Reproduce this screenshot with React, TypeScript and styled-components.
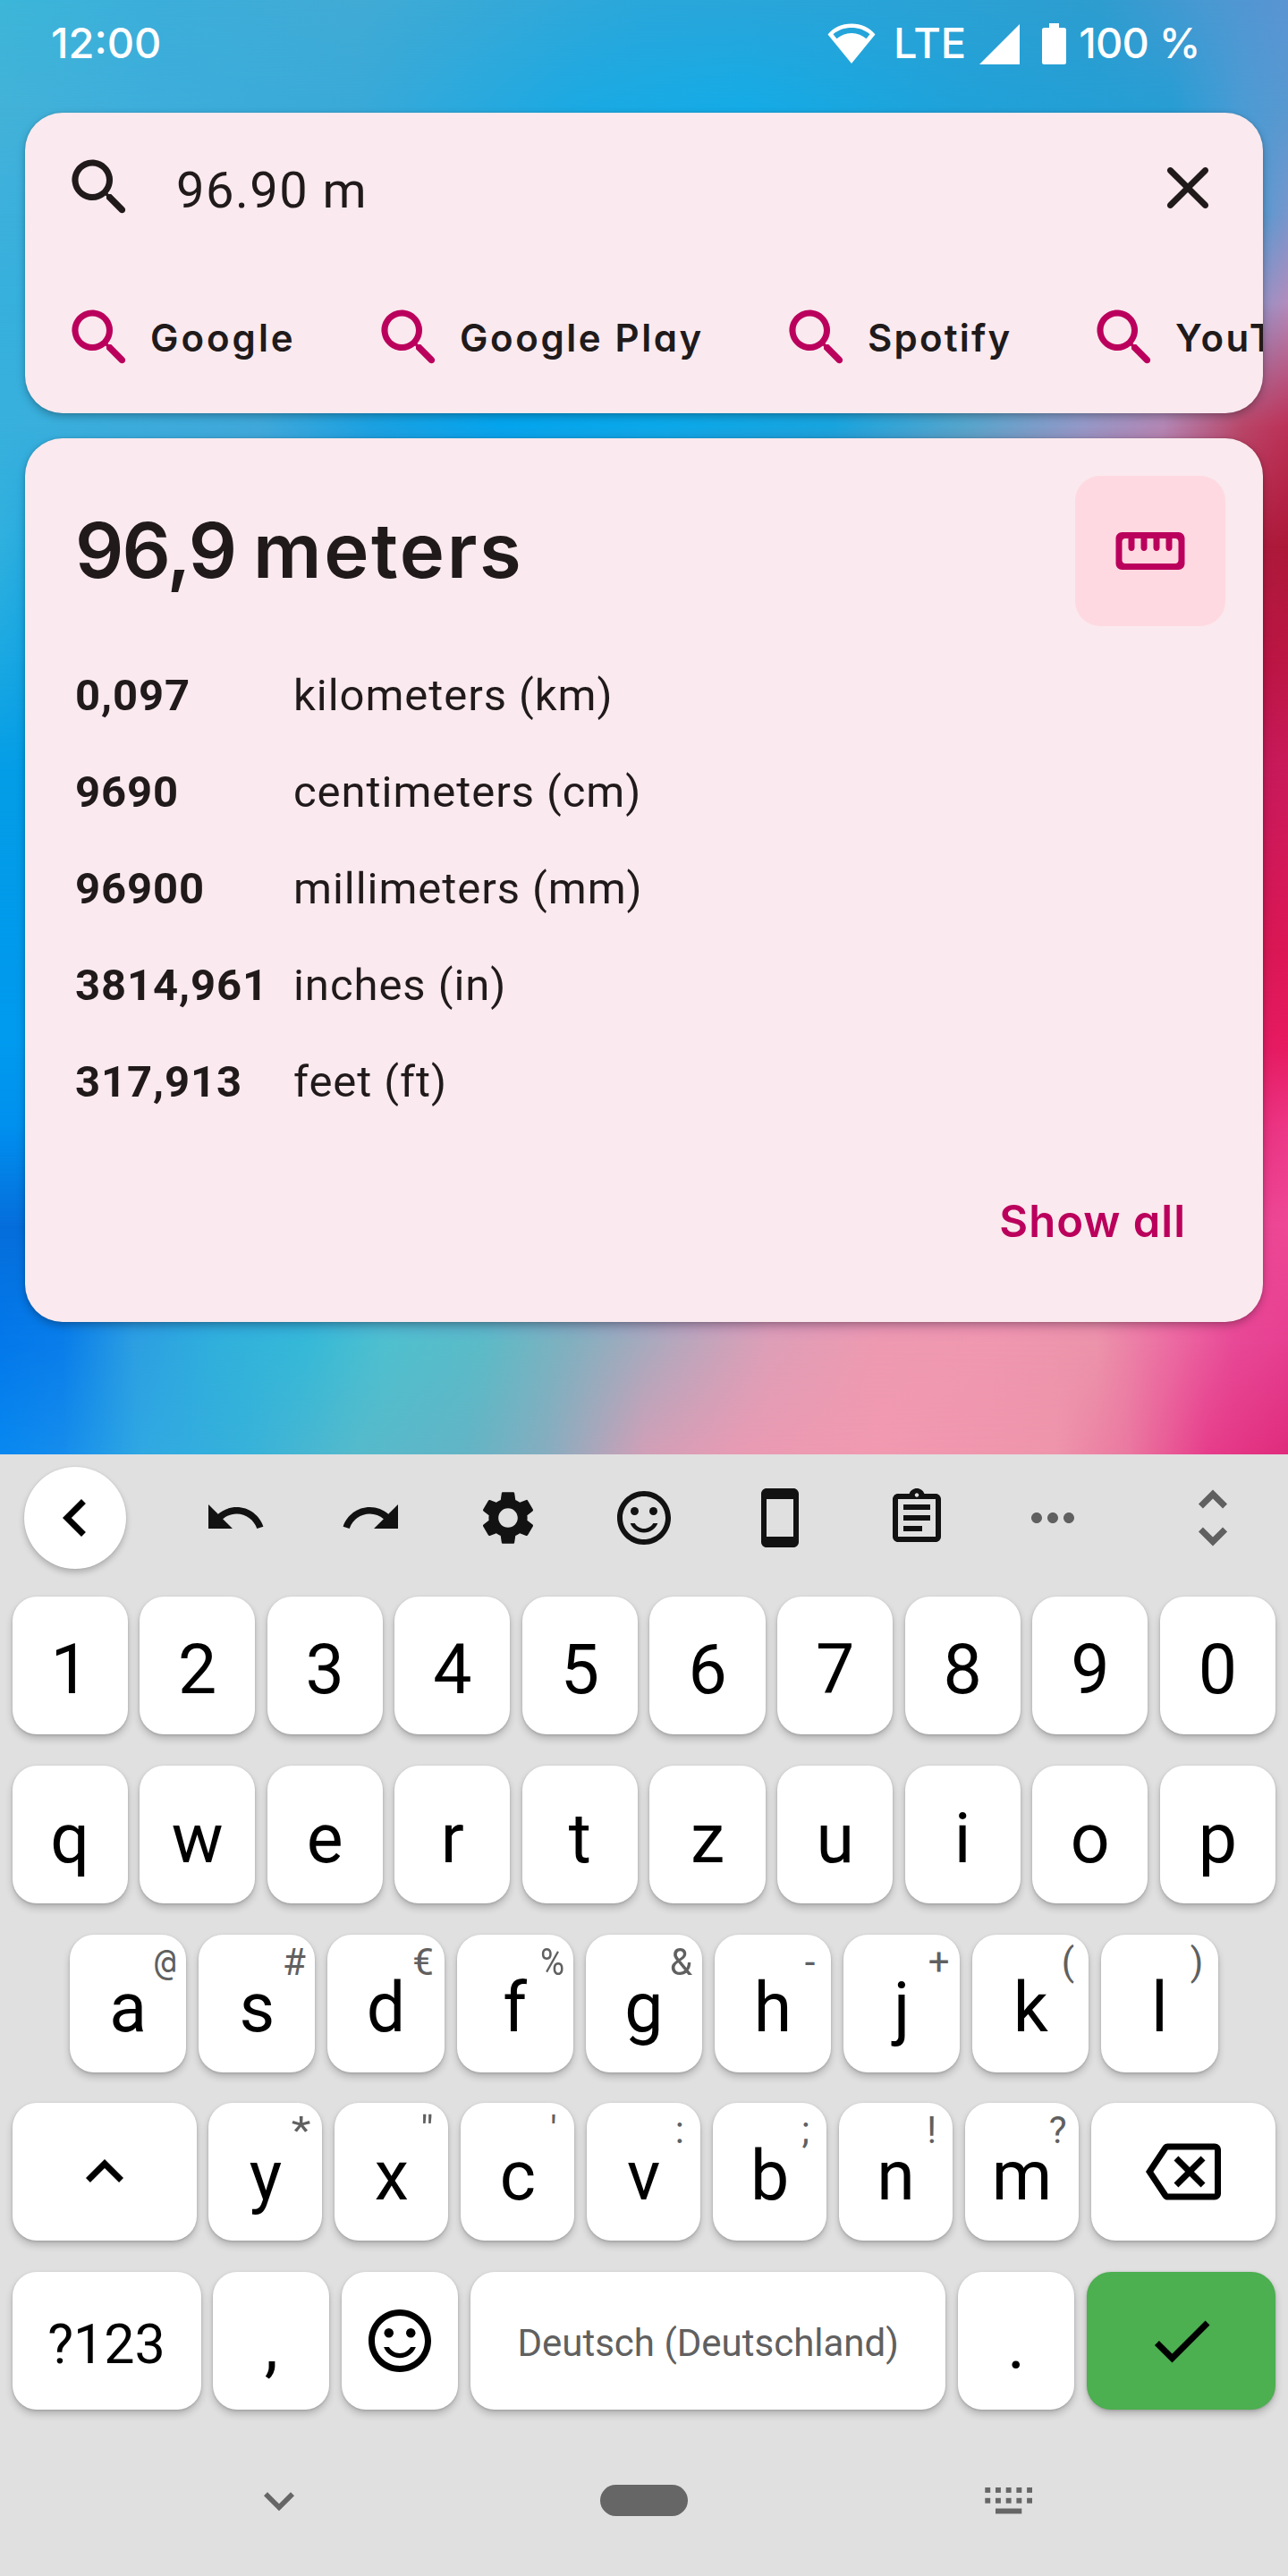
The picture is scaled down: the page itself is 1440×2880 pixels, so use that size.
import React from 'react';
import styled, { createGlobalStyle } from 'styled-components';
import {
  MdCheck,
  MdChevronLeft,
  MdKeyboardArrowDown,
  MdKeyboardArrowUp,
  MdMoreHoriz,
  MdOutlineAssignment,
  MdOutlineBackspace,
  MdOutlineSmartphone,
  MdRedo,
  MdSettings,
  MdUndo,
  MdUnfoldMore,
} from 'react-icons/md';

const INK = '#201a1b';
const ACCENT = '#ba005c';
const SURFACE = '#fae9ee';
const BRAND_FONT = `Inter, 'Open Sans', sans-serif`;

const GlobalStyle = createGlobalStyle`
  * { box-sizing: border-box; }
  html, body { margin: 0; padding: 0; }
  body { font-family: Roboto, 'Noto Sans', sans-serif; color: ${INK}; }
  svg { display: block; flex: none; }
`;

/* ---------- wallpaper: colour rows blended from top to bottom ---------- */

type ColorRow = { y: number; stops: [string, number][] };

const WALLPAPER: ColorRow[] = [
  { y: 0, stops: [['#3cb6d9', 0], ['#3caeda', 180], ['#41abd5', 400], ['#2aa7db', 720], ['#29a4d8', 960], ['#2e9dcf', 1230], ['#4a99d3', 1350], ['#5a94d3', 1440]] },
  { y: 120, stops: [['#43b2d8', 0], ['#3eaedb', 150], ['#39a9d8', 400], ['#1ca9e2', 640], ['#15abe6', 830], ['#1fa2d9', 1060], ['#279dd3', 1310], ['#4c9bd4', 1390], ['#5898d0', 1440]] },
  { y: 240, stops: [['#3cb0dc', 0], ['#1fa6e0', 720], ['#4c9bd2', 1400], ['#7896cc', 1440]] },
  { y: 340, stops: [['#37b0dd', 0], ['#10a8e8', 720], ['#8c92c6', 1400], ['#b48cbc', 1440]] },
  { y: 476, stops: [['#38b0dd', 0], ['#40a8da', 290], ['#1aa1e2', 420], ['#04a5ee', 560], ['#0ba9ea', 740], ['#18a5df', 930], ['#56a6cd', 1080], ['#9599c8', 1210], ['#b487b5', 1300], ['#b94668', 1390], ['#bd3158', 1440]] },
  { y: 610, stops: [['#2fb0de', 0], ['#1fa6e0', 60], ['#ae1c3e', 1400], ['#ad1838', 1440]] },
  { y: 740, stops: [['#1aa8e2', 0], ['#10a0e4', 60], ['#b81444', 1400], ['#bd1644', 1440]] },
  { y: 860, stops: [['#049de6', 0], ['#049de6', 60], ['#c2195a', 1400], ['#cb1a5b', 1440]] },
  { y: 1060, stops: [['#009aec', 0], ['#009aec', 60], ['#d41754', 1400], ['#dd1756', 1440]] },
  { y: 1170, stops: [['#009aef', 0], ['#009aef', 60], ['#e31c63', 1400], ['#e71a60', 1440]] },
  { y: 1260, stops: [['#0090ee', 0], ['#0090ee', 60], ['#e62f7c', 1400], ['#ed3787', 1440]] },
  { y: 1370, stops: [['#056edb', 0], ['#056edb', 60], ['#e94594', 1400], ['#ee4896', 1440]] },
  { y: 1500, stops: [['#0378ea', 0], ['#097dea', 70], ['#2c9fe2', 150], ['#30b0dc', 240], ['#35b9d8', 340], ['#4fc0cf', 430], ['#5cbbc7', 540], ['#83b0bf', 640], ['#b5a8bd', 750], ['#de9fb7', 860], ['#ee9ab1', 980], ['#f098b0', 1100], ['#ec94ab', 1225], ['#ec6ba2', 1310], ['#e84997', 1380], ['#e73f91', 1440]] },
  { y: 1626, stops: [['#0888f0', 0], ['#168dec', 70], ['#30a8e2', 160], ['#36b1da', 270], ['#55bacb', 400], ['#62b4c5', 520], ['#86adbf', 610], ['#d19fb7', 720], ['#e99ab3', 830], ['#f199b0', 980], ['#ee94ab', 1180], ['#ea78a0', 1260], ['#e63d8b', 1350], ['#df2b7c', 1440]] },
];

const Wallpaper = styled.div`
  position: absolute;
  inset: 0;
  z-index: -1;
`;

const WallpaperRow = styled.div<{ $row: ColorRow; $from: number }>`
  position: absolute;
  inset: 0;
  background: linear-gradient(to right, ${p => p.$row.stops.map(([c, x]) => `${c} ${x}px`).join(', ')});
  ${p => p.$row.y > 0 && `mask-image: linear-gradient(to bottom, transparent ${p.$from}px, #000 ${p.$row.y}px);`}
`;

/* ---------- page frame ---------- */

const Phone = styled.main`
  position: relative;
  z-index: 0;
  display: flex;
  flex-direction: column;
  width: 1440px;
  height: 2880px;
  overflow: hidden;
`;

const Home = styled.section`
  display: flex;
  flex-direction: column;
  height: 1626px;
  padding: 0 28px;
`;

/* ---------- status bar ---------- */

const StatusBar = styled.header`
  display: flex;
  align-items: center;
  height: 98px;
  margin-bottom: 28px;
  padding: 0 72px 0 29px;
  color: #fff;
  font: 500 47px/94px ${BRAND_FONT};
`;

const StatusText = styled.span<{ $spacing: number; $left?: number }>`
  letter-spacing: ${p => p.$spacing}px;
  margin-left: ${p => p.$left ?? 0}px;
  margin-bottom: 3px;
  white-space: nowrap;
`;

const StatusIcons = styled.div`
  display: flex;
  align-items: center;
  width: 415px;
  margin-left: auto;
`;

const Battery = styled.svg`
  margin-left: 25px;
`;

const Signal = styled.svg`
  margin-left: 15px;
`;

/* ---------- cards ---------- */

const Card = styled.section`
  flex: none;
  border-radius: 42px;
  background: ${SURFACE};
  box-shadow: 0 4px 10px rgba(0, 0, 0, 0.26), 0 0 3px rgba(0, 0, 0, 0.12);
  overflow: hidden;
`;

const SearchCard = styled(Card)`
  height: 336px;
  margin-bottom: 28px;
`;

const SearchField = styled.div`
  display: flex;
  align-items: center;
  height: 168px;
  padding: 0 42px;
`;

const Query = styled.span`
  flex: 1;
  margin: 5px 0 0 43px;
  font-size: 56px;
  letter-spacing: 1.5px;
`;

const Chips = styled.div`
  display: flex;
  padding: 42px 0 0 42px;
`;

const Chip = styled.div<{ $width: number }>`
  display: flex;
  flex: none;
  align-items: center;
  gap: 14px;
  width: ${p => p.$width}px;
  height: 84px;
  color: ${ACCENT};
`;

const ChipLabel = styled.span<{ $spacing: number }>`
  margin-top: -1px;
  color: ${INK};
  font: 600 42px/60px ${BRAND_FONT};
  font-feature-settings: 'cv11';
  letter-spacing: ${p => p.$spacing}px;
  white-space: nowrap;
`;

const ResultCard = styled(Card)`
  display: flex;
  flex-direction: column;
  height: 988px;
  padding: 42px;
`;

const ResultHeader = styled.div`
  display: flex;
  align-items: center;
  justify-content: space-between;
  height: 168px;
  padding-left: 14px;
`;

const ResultTitle = styled.h1`
  margin: 0;
  font: 600 85px/120px ${BRAND_FONT};
  letter-spacing: 2.6px;
`;

const TitleAmount = styled.span`
  letter-spacing: -1.8px;
`;

const UnitBadge = styled.div`
  display: flex;
  align-items: center;
  justify-content: center;
  width: 168px;
  height: 168px;
  border-radius: 28px;
  background: #ffd9e1;
  color: ${ACCENT};
`;

const Conversions = styled.dl`
  display: grid;
  grid-template-columns: 244px 1fr;
  grid-auto-rows: 108.2px;
  align-items: center;
  margin: 23px 0 0;
  padding-left: 14px;
  font-size: 49px;
`;

const Amount = styled.dt`
  font-weight: 700;
  letter-spacing: 0.9px;
`;

const Unit = styled.dd`
  margin: 0;
  letter-spacing: 0.95px;
`;

const ShowAll = styled.button`
  align-self: flex-end;
  margin: 62px 44px 0 0;
  padding: 0;
  border: 0;
  background: none;
  color: ${ACCENT};
  font: 600 49px/80px ${BRAND_FONT};
  font-feature-settings: 'cv11';
  letter-spacing: 1px;
`;

/* ---------- keyboard ---------- */

const Keyboard = styled.section`
  display: flex;
  flex-direction: column;
  height: 1254px;
  background: #e0e0e0;
  color: #000;
`;

const Toolbar = styled.div`
  display: flex;
  align-items: center;
  height: 142px;
  margin-bottom: 17px;
  padding: 0 42px 0 27px;
`;

const BackButton = styled.button`
  display: flex;
  align-items: center;
  justify-content: center;
  width: 114px;
  height: 114px;
  padding: 0;
  border: 0;
  border-radius: 50%;
  background: #fff;
  color: #000;
  box-shadow: 0 4px 7px rgba(0, 0, 0, 0.22), 0 0 2px rgba(0, 0, 0, 0.1);
`;

const Tools = styled.div`
  display: grid;
  grid-template-columns: repeat(7, 152.3px);
  justify-items: center;
  margin-left: 46px;
  color: #121212;
`;

const Muted = styled.span<{ $left?: number }>`
  display: inline-flex;
  margin-left: ${p => p.$left ?? 0}px;
  color: #606060;
`;

const KeyRow = styled.div<{ $inset?: number; $gap?: number }>`
  display: flex;
  gap: ${p => p.$gap ?? 13.5}px;
  height: 154px;
  margin-bottom: 34.75px;
  padding: 0 ${p => (p.$inset ?? 13.5) + 0.5}px 0 ${p => p.$inset ?? 13.5}px;
`;

const KeyCap = styled.div<{ $width?: number; $size?: number; $drop?: number; $color?: string; $fill?: string }>`
  position: relative;
  display: flex;
  flex: ${p => (p.$width ? `0 0 ${p.$width}px` : '1 1 0')};
  align-items: center;
  justify-content: center;
  height: 154px;
  padding-top: ${p => p.$drop ?? 0}px;
  border-radius: 27px;
  background: ${p => p.$fill ?? '#fff'};
  box-shadow: 0 5px 8px rgba(0, 0, 0, 0.2), 0 1px 3px rgba(0, 0, 0, 0.16);
  color: ${p => p.$color ?? '#000'};
  font-size: ${p => p.$size ?? 77}px;
  line-height: 1;
  white-space: nowrap;
`;

const Hint = styled.span<{ $squeeze: number; $mono: boolean }>`
  position: absolute;
  top: 9px;
  right: 3px;
  width: 41px;
  display: flex;
  justify-content: center;
  transform: scaleX(${p => p.$squeeze});
  color: #606060;
  font-family: ${p => (p.$mono ? `'DejaVu Sans Mono', monospace` : 'inherit')};
  font-size: ${p => (p.$mono ? 40 : 42)}px;
  line-height: 44px;
`;

const NavBar = styled.nav`
  display: grid;
  grid-template-columns: 1fr 98px 1fr;
  align-items: center;
  height: 60px;
  margin-top: 33px;
  color: #666;
`;

const NavSlot = styled.div<{ $pad: number }>`
  padding-left: ${p => p.$pad}px;
`;

const HomePill = styled.div`
  height: 35px;
  border-radius: 18px;
  background: #666;
`;

/* ---------- drawings ---------- */

const SearchGlyph = () => (
  <svg width="84" height="84" viewBox="0 0 24 24" fill="currentColor">
    <path d="M15.5 14h-.79l-.28-.27c1.2-1.4 1.82-3.31 1.48-5.34-.47-2.78-2.79-5-5.59-5.34-4.23-.52-7.79 3.04-7.27 7.27.34 2.8 2.56 5.12 5.34 5.59 2.03.34 3.94-.28 5.34-1.48l.27.28v.79l4.25 4.25c.41.41 1.08.41 1.49 0 .41-.41.41-1.08 0-1.49L15.5 14zm-6 0C7.01 14 5 11.99 5 9.5S7.01 5 9.5 5 14 7.01 14 9.5 11.99 14 9.5 14z" />
  </svg>
);

const CloseGlyph = () => (
  <svg width="84" height="84" viewBox="0 0 24 24" fill="currentColor">
    <path d="M18.3 5.71c-.39-.39-1.02-.39-1.41 0L12 10.59 7.11 5.7c-.39-.39-1.02-.39-1.41 0-.39.39-.39 1.02 0 1.41L10.59 12 5.7 16.89c-.39.39-.39 1.02 0 1.41.39.39 1.02.39 1.41 0L12 13.41l4.89 4.89c.39.39 1.02.39 1.41 0 .39-.39.39-1.02 0-1.41L13.41 12l4.89-4.89c.38-.38.38-1.02 0-1.4z" />
  </svg>
);

const RulerGlyph = () => (
  <svg width="84" height="84" viewBox="0 0 24 24" fill="currentColor">
    <path d="M21 6H3c-1.1 0-2 .9-2 2v8c0 1.1.9 2 2 2h18c1.1 0 2-.9 2-2V8c0-1.1-.9-2-2-2zm-1 10H4c-.55 0-1-.45-1-1V9c0-.55.45-1 1-1h1v3c0 .55.45 1 1 1s1-.45 1-1V8h2v3c0 .55.45 1 1 1s1-.45 1-1V8h2v3c0 .55.45 1 1 1s1-.45 1-1V8h2v3c0 .55.45 1 1 1s1-.45 1-1V8h1c.55 0 1 .45 1 1v6c0 .55-.45 1-1 1z" />
  </svg>
);

const SmileGlyph = ({ size }: { size: number }) => (
  <svg width={size} height={size} viewBox="0 0 24 24" fill="currentColor">
    <circle cx="15.5" cy="9.5" r="1.5" />
    <circle cx="8.5" cy="9.5" r="1.5" />
    <path d="M12 16c-1.48 0-2.75-.81-3.45-2H6.88c.8 2.05 2.79 3.5 5.12 3.5s4.32-1.45 5.12-3.5h-1.67c-.7 1.19-1.97 2-3.45 2zm-.01-14C6.47 2 2 6.48 2 12s4.47 10 9.99 10C17.52 22 22 17.52 22 12S17.52 2 11.99 2zM12 20c-4.42 0-8-3.58-8-8s3.58-8 8-8 8 3.58 8 8-3.58 8-8 8z" />
  </svg>
);

const WifiGlyph = () => (
  <svg width="54" height="46" viewBox="0 0 54 46">
    <path
      fillRule="evenodd"
      fill="#fff"
      d="M27 45 0.5 12.5C7 4.5 16 0.5 27 0.5S47 4.5 53.5 12.5ZM6.5 12.300 10.500 17.300C15 13.300 20.500 11 27 11s12 2.300 16.500 6.300L47.500 12.300C42 7.500 35 5 27 5S12 7.500 6.500 12.300Z"
    />
  </svg>
);

const KeyboardGlyph = () => (
  <svg width="54" height="32" viewBox="0 0 54 32" fill="currentColor">
    {[0, 1, 2, 3, 4].map(i => (
      <React.Fragment key={i}>
        <rect x={0.3 + i * 11.7} y="1" width="5.9" height="5.9" />
        <rect x={0.3 + i * 11.7} y="12.8" width="5.9" height="5.9" />
      </React.Fragment>
    ))}
    <rect x="12" y="24.5" width="29.3" height="5.9" />
  </svg>
);

/* ---------- data ---------- */

const CHIPS = [
  { label: 'Google', width: 346, spacing: 3 },
  { label: 'Google Play', width: 456, spacing: 2.6 },
  { label: 'Spotify', width: 344, spacing: 2.2 },
  { label: 'YouTube', width: 344, spacing: 2.6 },
];

const CONVERSIONS = [
  ['0,097', 'kilometers (km)'],
  ['9690', 'centimeters (cm)'],
  ['96900', 'millimeters (mm)'],
  ['3814,961', 'inches (in)'],
  ['317,913', 'feet (ft)'],
];

const HINT_SQUEEZE: Record<string, number> = { '%': 0.88, '&': 0.97, '*': 1.2, '"': 1.1 };

const LetterKey = ({ letter, hint }: { letter: string; hint?: string }) => (
  <KeyCap $drop={11}>
    {letter}
    {hint && (
      <Hint $squeeze={HINT_SQUEEZE[hint] ?? 1} $mono={hint === '@'}>
        {hint}
      </Hint>
    )}
  </KeyCap>
);

export default function App() {
  return (
    <>
      <GlobalStyle />
      <Phone>
        <Wallpaper>
          {WALLPAPER.map((row, i) => (
            <WallpaperRow key={row.y} $row={row} $from={i ? WALLPAPER[i - 1].y : 0} />
          ))}
        </Wallpaper>

        <Home>
          <StatusBar>
            <StatusText $spacing={0}>12:00</StatusText>
            <StatusIcons>
              <WifiGlyph />
              <StatusText $spacing={0} $left={20}>LTE</StatusText>
              <Signal width="45" height="45" viewBox="0 0 45 45">
                <path d="M45 0V45H0Z" fill="#fff" />
              </Signal>
              <Battery width="27" height="46" viewBox="0 0 27 46">
                <path d="M8 0h11v5h5.500a2.500 2.500 0 0 1 2.500 2.500v36a2.500 2.500 0 0 1-2.500 2.500h-22a2.500 2.500 0 0 1-2.500-2.500v-36a2.500 2.500 0 0 1 2.500-2.500h5.500Z" fill="#fff" />
              </Battery>
              <StatusText $spacing={-0.8} $left={14}>100 %</StatusText>
            </StatusIcons>
          </StatusBar>

          <SearchCard>
            <SearchField>
              <SearchGlyph />
              <Query>96.90 m</Query>
              <CloseGlyph />
            </SearchField>
            <Chips>
              {CHIPS.map(chip => (
                <Chip key={chip.label} $width={chip.width}>
                  <SearchGlyph />
                  <ChipLabel $spacing={chip.spacing}>{chip.label}</ChipLabel>
                </Chip>
              ))}
            </Chips>
          </SearchCard>

          <ResultCard>
            <ResultHeader>
              <ResultTitle>
                <TitleAmount>96,9 </TitleAmount>meters
              </ResultTitle>
              <UnitBadge>
                <RulerGlyph />
              </UnitBadge>
            </ResultHeader>
            <Conversions>
              {CONVERSIONS.map(([amount, unit]) => (
                <React.Fragment key={unit}>
                  <Amount>{amount}</Amount>
                  <Unit>{unit}</Unit>
                </React.Fragment>
              ))}
            </Conversions>
            <ShowAll>Show all</ShowAll>
          </ResultCard>
        </Home>

        <Keyboard>
          <Toolbar>
            <BackButton>
              <MdChevronLeft size={84} />
            </BackButton>
            <Tools>
              <MdUndo size={72} />
              <MdRedo size={72} />
              <MdSettings size={72} />
              <SmileGlyph size={72} />
              <MdOutlineSmartphone size={72} />
              <MdOutlineAssignment size={72} />
              <Muted>
                <MdMoreHoriz size={72} />
              </Muted>
            </Tools>
            <Muted $left={61}>
              <MdUnfoldMore size={84} />
            </Muted>
          </Toolbar>

          <KeyRow>
            {[...'1234567890'].map(c => <LetterKey key={c} letter={c} />)}
          </KeyRow>
          <KeyRow>
            {[...'qwertzuiop'].map(c => <LetterKey key={c} letter={c} />)}
          </KeyRow>
          <KeyRow $inset={78} $gap={14}>
            {[...'asdfghjkl'].map((c, i) => <LetterKey key={c} letter={c} hint={'@#€%&-+()'[i]} />)}
          </KeyRow>
          <KeyRow $gap={13.9}>
            <KeyCap $width={206}>
              <MdKeyboardArrowUp size={84} />
            </KeyCap>
            {[...'yxcvbnm'].map((c, i) => <LetterKey key={c} letter={c} hint={`*"':;!?`[i]} />)}
            <KeyCap $width={206}>
              <MdOutlineBackspace size={84} />
            </KeyCap>
          </KeyRow>
          <KeyRow $gap={13.8}>
            <KeyCap $width={211} $size={61} $drop={8}>?123</KeyCap>
            <KeyCap $width={130} $drop={11}>,</KeyCap>
            <KeyCap $width={130}>
              <SmileGlyph size={84} />
            </KeyCap>
            <KeyCap $size={42} $drop={5} $color="#606060">Deutsch (Deutschland)</KeyCap>
            <KeyCap $width={130} $drop={11}>.</KeyCap>
            <KeyCap $width={211} $fill="#4caf50">
              <MdCheck size={84} />
            </KeyCap>
          </KeyRow>

          <NavBar>
            <NavSlot $pad={278}>
              <MdKeyboardArrowDown size={68} />
            </NavSlot>
            <HomePill />
            <NavSlot $pad={332}>
              <KeyboardGlyph />
            </NavSlot>
          </NavBar>
        </Keyboard>
      </Phone>
    </>
  );
}
